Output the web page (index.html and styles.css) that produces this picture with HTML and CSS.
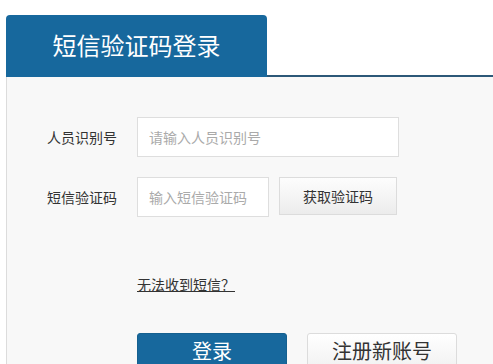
FILE: index.html
```html
<!DOCTYPE html>
<html lang="zh-CN">
<head>
    <meta charset="UTF-8">
    <title>短信验证码登录</title>
    <link rel="stylesheet" href="styles.css">
</head>
<body>
    <div class="login-box">
        <div class="tab-bar">
            <div class="tab active">短信验证码登录</div>
            <div class="tab-rest"></div>
        </div>

        <div class="panel">
            <div class="form-row">
                <label class="form-label">人员识别号</label>
                <input class="form-input long" type="text" placeholder="请输入人员识别号">
            </div>
            <div class="form-row">
                <label class="form-label">短信验证码</label>
                <input class="form-input short" type="text" placeholder="输入短信验证码">
                <button class="code-button">获取验证码</button>
            </div>

            <div class="help-row">
                <a class="help-link" href="#">无法收到短信？</a>
            </div>

            <div class="action-row">
                <button class="login-button">登录</button>
                <button class="register-button">注册新账号</button>
            </div>
        </div>
    </div>
</body>
</html>
```

FILE: styles.css
```css
body {
    margin: 0;
    background: #fff;
    font-family: "Noto Sans CJK SC", "Liberation Sans", sans-serif;
    color: #333;
}

.login-box {
    margin: 15px 0 0 6px;
}

.tab-bar {
    display: flex;
    align-items: flex-end;
}

.tab {
    width: 261px;
    height: 62px;
    line-height: 60px;
    text-align: center;
    font-size: 24px;
    color: #fff;
    background: #17689d;
    border-radius: 4px 4px 0 0;
}

.tab-rest {
    flex: 1;
    height: 1px;
    border-bottom: 2px solid #2c5878;
}

.panel {
    background: #f8f8f8;
    border-left: 1px solid #dcdcdc;
    padding: 40px 0 0 0;
    height: 260px;
}

.form-row {
    display: flex;
    align-items: center;
    height: 40px;
    margin-bottom: 20px;
}

.form-label {
    width: 110px;
    margin-right: 20px;
    text-align: right;
    font-size: 14px;
    color: #333;
}

.form-input {
    box-sizing: border-box;
    height: 40px;
    border: 1px solid #dedede;
    background: #fff;
    padding: 0 11px;
    font-family: inherit;
    font-size: 14px;
    color: #333;
    outline: none;
}

.form-input::placeholder {
    color: #aaa;
}

.form-input.long {
    width: 262px;
}

.form-input.short {
    width: 132px;
}

.code-button {
    box-sizing: border-box;
    width: 118px;
    height: 38px;
    margin: 0 0 2px 10px;
    border: 1px solid #dcdcdc;
    background: linear-gradient(#fdfdfd, #ececec);
    font-family: inherit;
    font-size: 14px;
    color: #333;
    cursor: pointer;
}

.help-row {
    padding-left: 130px;
    margin-top: 56px;
    line-height: 20px;
}

.help-link {
    font-size: 14px;
    color: #333;
    text-decoration: underline;
}

.action-row {
    display: flex;
    gap: 20px;
    padding-left: 130px;
    margin-top: 39px;
}

.login-button,
.register-button {
    box-sizing: border-box;
    width: 150px;
    height: 40px;
    padding: 0 0 6px 0;
    font-family: inherit;
    font-size: 20px;
    cursor: pointer;
    border-radius: 3px;
}

.login-button {
    border: 1px solid #15608f;
    background: #17689d;
    color: #fff;
}

.register-button {
    border: 1px solid #dcdcdc;
    background: linear-gradient(#fff, #f0f0f0);
    color: #333;
}
```
